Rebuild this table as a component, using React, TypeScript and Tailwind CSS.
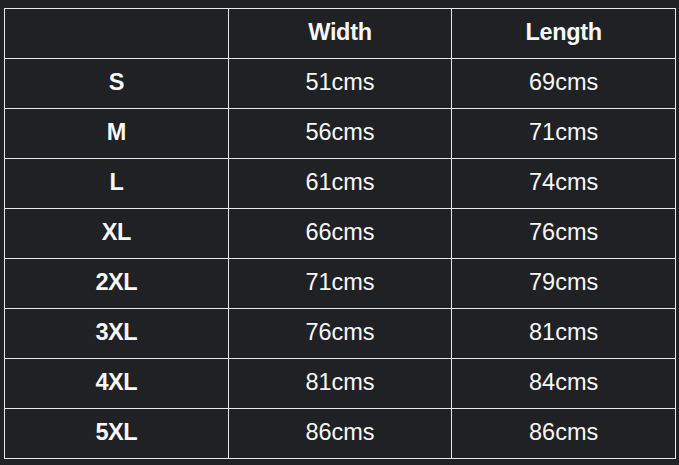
import React from "react";

const rows: [string, string, string][] = [
  ["S", "51cms", "69cms"],
  ["M", "56cms", "71cms"],
  ["L", "61cms", "74cms"],
  ["XL", "66cms", "76cms"],
  ["2XL", "71cms", "79cms"],
  ["3XL", "76cms", "81cms"],
  ["4XL", "81cms", "84cms"],
  ["5XL", "86cms", "86cms"],
];

export default function App() {
  return (
    <div
      className="w-[679px] h-[465px] bg-[#202124] pt-[8px] pl-[4px] text-[#f7f7f7]"
      style={{ fontFamily: '"Liberation Sans", Arial, sans-serif' }}
    >
      <table className="w-[672px] border-collapse table-fixed text-[23.5px] leading-none">
        <thead>
          <tr className="h-[50px]">
            <th className="border-[1.5px] border-[#e8e8e8] w-1/3 pb-[2px]"></th>
            <th className="border-[1.5px] border-[#e8e8e8] font-bold w-1/3 pb-[2px] tracking-[-0.3px]">Width</th>
            <th className="border-[1.5px] border-[#e8e8e8] font-bold w-1/3 pb-[2px] tracking-[-0.3px]">Length</th>
          </tr>
        </thead>
        <tbody>
          {rows.map(([s, w, l]) => (
            <tr key={s} className="h-[50px]">
              <td className="border-[1.5px] border-[#e8e8e8] text-center font-bold pb-[2px] tracking-[-0.5px]">{s}</td>
              <td className="border-[1.5px] border-[#e8e8e8] text-center pb-[2px]">{w}</td>
              <td className="border-[1.5px] border-[#e8e8e8] text-center pb-[2px]">{l}</td>
            </tr>
          ))}
        </tbody>
      </table>
    </div>
  );
}
